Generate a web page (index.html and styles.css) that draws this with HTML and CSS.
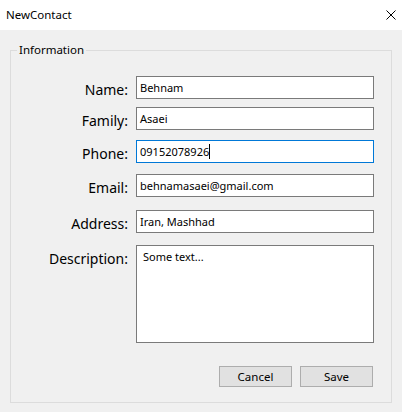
FILE: index.html
```html
<!DOCTYPE html>
<html lang="en">
<head>
<meta charset="utf-8">
<title>NewContact</title>
<link rel="stylesheet" href="styles.css">
</head>
<body>
<div class="window">
  <header class="titlebar">
    <span class="title">NewContact</span>
    <svg class="close" width="10" height="10" viewBox="0 0 10 10" aria-label="Close">
      <path d="M0.5 0.5 L9.5 9.5 M9.5 0.5 L0.5 9.5" stroke="#000" stroke-width="1" fill="none"/>
    </svg>
  </header>
  <main class="client">
    <section class="group">
      <span class="legend">Information</span>
      <div class="form">
        <div class="row">
          <label class="label">Name:</label>
          <div class="field">Behnam</div>
        </div>
        <div class="row gap-8">
          <label class="label">Family:</label>
          <div class="field">Asaei</div>
        </div>
        <div class="row gap-10">
          <label class="label">Phone:</label>
          <div class="field focused">09152078926<span class="caret"></span></div>
        </div>
        <div class="row gap-11">
          <label class="label">Email:</label>
          <div class="field">behnamasaei@gmail.com</div>
        </div>
        <div class="row gap-13">
          <label class="label">Address:</label>
          <div class="field">Iran, Mashhad</div>
        </div>
        <div class="row gap-12">
          <label class="label">Description:</label>
          <div class="field area">Some text...</div>
        </div>
      </div>
      <div class="actions">
        <button class="btn">Cancel</button>
        <button class="btn">Save</button>
      </div>
    </section>
  </main>
</div>
</body>
</html>
```
FILE: styles.css
```css
* { box-sizing: border-box; }
html, body { margin: 0; padding: 0; }
body {
  width: 402px;
  height: 412px;
  overflow: hidden;
  font-family: "Noto Sans", "Liberation Sans", sans-serif;
  color: #000;
  background: #f0f0f0;
}
.window {
  display: flex;
  flex-direction: column;
  height: 412px;
}
.titlebar {
  height: 30px;
  flex: none;
  background: #fff;
  display: flex;
  align-items: center;
  justify-content: space-between;
  padding: 0 6px 0 6px;
}
.title {
  font-size: 11.5px;
  line-height: 30px;
}
.close {
  display: block;
}
.client {
  flex: 1;
  background: #f0f0f0;
  padding: 20px 10px 9px 10px;
}
.group {
  position: relative;
  width: 382px;
  height: 353px;
  border: 1px solid #dcdcdc;
  padding: 25px 17px 0 0;
  display: flex;
  flex-direction: column;
}
.legend {
  position: absolute;
  left: 6px;
  top: -9px;
  padding: 0 2px;
  background: #f0f0f0;
  font-size: 11.5px;
  line-height: 16px;
}
.form {
  display: flex;
  flex-direction: column;
}
.row {
  display: grid;
  grid-template-columns: 117px 238px;
  column-gap: 8px;
  align-items: start;
}
.gap-8 { margin-top: 8px; }
.gap-10 { margin-top: 10px; }
.gap-11 { margin-top: 11px; }
.gap-12 { margin-top: 12px; }
.gap-13 { margin-top: 13px; }
.label {
  height: 23px;
  text-align: right;
  font-size: 14px;
  line-height: 19px;
  padding-top: 4px;
  white-space: nowrap;
}
.field {
  height: 23px;
  background: #fff;
  border: 1px solid #7a7a7a;
  font-size: 11px;
  line-height: 19px;
  padding: 1px 3px;
  white-space: nowrap;
}
.field.focused {
  border-color: #0078d7;
}
.caret {
  display: inline-block;
  width: 1px;
  height: 15px;
  background: #000;
  vertical-align: -3px;
}
.field.area {
  height: 98px;
  padding: 1px 6px;
}
.actions {
  display: flex;
  justify-content: flex-end;
  gap: 8px;
  margin-top: 23px;
  padding-right: 1px;
}
.btn {
  width: 73px;
  height: 21px;
  margin: 0;
  padding: 0;
  background: #e1e1e1;
  border: 1px solid #adadad;
  border-radius: 0;
  font-family: "Noto Sans", "Liberation Sans", sans-serif;
  font-size: 11.5px;
  line-height: 19px;
  color: #000;
}
```
